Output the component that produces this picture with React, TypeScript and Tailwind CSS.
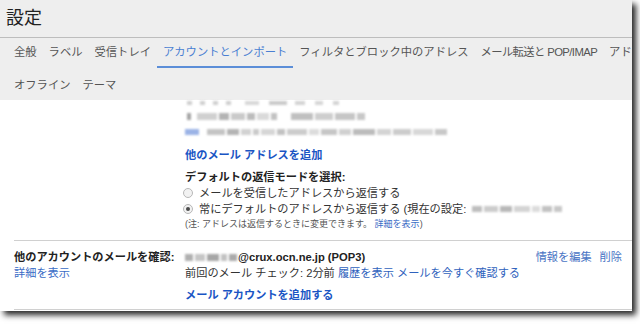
const FONT = "font-['Liberation_Sans','Noto_Sans_CJK_JP',sans-serif]"

const TABS = [
  "全般",
  "ラベル",
  "受信トレイ",
  "アカウントとインポート",
  "フィルタとブロック中のアドレス",
  "メール転送と POP/IMAP",
  "アドオン",
]

type Part = [number, string]

// blurred-out personal info
function Smudge({ parts, h = 6 }: { parts: Part[]; h?: number }) {
  return (
    <span className="inline-flex items-center gap-[2px] blur-[1.1px] align-middle">
      {parts.map(([w, c], i) => (
        <span key={i} className="block" style={{ width: w, height: h, background: c }} />
      ))}
    </span>
  )
}

function Radio({ checked }: { checked?: boolean }) {
  return (
    <span className="ml-[-2px] flex h-[10px] w-[10px] shrink-0 items-center justify-center rounded-full border border-[#b8b8b8] bg-[#f2f2f2]">
      {checked && <span className="h-[4px] w-[4px] rounded-full bg-[#4a4a4a]" />}
    </span>
  )
}

const ROW1: Part[] = [
  [5, "#cfcfcf"], [4, "#fff"], [5, "#cfcfcf"], [4, "#fff"], [5, "#cfcfcf"], [4, "#fff"], [5, "#cfcfcf"],
  [10, "#fff"], [14, "#d8d8d8"], [6, "#fff"], [18, "#cacaca"], [4, "#fff"], [10, "#d4d4d4"], [6, "#fff"], [8, "#d6d6d6"], [6, "#fff"], [6, "#d4d4d4"],
]
const ROW2: Part[] = [
  [4, "#a4a4a4"], [2, "#fff"], [20, "#d0d0d0"], [10, "#b4b4b4"], [14, "#cacaca"], [8, "#bcbcbc"], [12, "#dadada"], [6, "#c2c2c2"],
  [10, "#fff"], [22, "#c0c0c0"], [18, "#cecece"], [20, "#c6c6c6"], [8, "#c8c8c8"],
]
const ROW3: Part[] = [
  [14, "#9bb3e6"], [4, "#fff"], [18, "#c4c4c4"], [12, "#b4b4b4"], [10, "#d2d2d2"], [6, "#cacaca"], [14, "#d6d6d6"], [8, "#c2c2c2"],
  [20, "#cccccc"], [10, "#dcdcdc"], [16, "#c6c6c6"], [12, "#d0d0d0"], [22, "#bcbcbc"], [14, "#d4d4d4"], [18, "#cccccc"], [20, "#d8d8d8"], [12, "#c8c8c8"],
]
const ACCOUNT: Part[] = [[8, "#b0b0b0"], [10, "#c6c6c6"], [12, "#a6a6a6"], [6, "#c2c2c2"], [8, "#aaaaaa"]]
const CURRENT: Part[] = [[10, "#bebebe"], [14, "#cccccc"], [12, "#b8b8b8"], [16, "#d4d4d4"], [8, "#dcdcdc"], [10, "#c2c2c2"], [8, "#c8c8c8"]]

export default function App() {
  return (
    <div className={`h-[324px] w-[640px] bg-white ${FONT}`}>
      <div className="flex h-[311px] w-[632px] flex-col overflow-hidden bg-white shadow-[4px_4px_6px_rgba(0,0,0,0.85)]">
        {/* title */}
        <div className="flex h-[38px] shrink-0 items-center border-b border-[#bdbdbd] bg-[#eeeeee] pb-[1px] pl-[6px]">
          <h1 className="text-[18px] leading-none text-[#222]">設定</h1>
        </div>

        {/* tabs */}
        <div className="h-[62px] shrink-0 bg-[#eeeeee] pl-[8px] text-[11.3px] text-[#555]">
          <div className="flex h-[30px] whitespace-nowrap">
            {TABS.map((t, i) => (
              <div
                key={t}
                className={
                  i === 3
                    ? "flex shrink-0 items-center border-b-2 border-[#5b8ed8] px-[6px] pt-[1px] text-[#4a7fd2]"
                    : i === 5
                      ? "flex shrink-0 items-center border-b-2 border-transparent px-[6px] pt-[1px] tracking-[-0.6px]"
                      : "flex shrink-0 items-center border-b-2 border-transparent px-[6px] pt-[1px]"
                }
              >
                {t}
              </div>
            ))}
          </div>
          <div className="flex h-[32px] items-center pt-[2px]">
            <span className="px-[6px]">オフライン</span>
            <span className="px-[6px]">テーマ</span>
          </div>
        </div>

        {/* send mail as */}
        <div className="ml-[14px] border-b border-[#d0d0d0] pb-[7px] pl-[171px] text-[11.2px] text-[#222]">
          <div className="flex h-[6px] items-center pl-[2px]">
            <Smudge parts={ROW1} h={4} />
          </div>
          <div className="mt-[2px] flex h-[16px] items-center pl-[2px]">
            <Smudge parts={ROW2} h={7} />
          </div>
          <div className="flex h-[16px] items-center">
            <Smudge parts={ROW3} h={6} />
          </div>
          <div className="mt-[7px] flex h-[16px] items-center font-bold text-[#1a55c4]">他のメール アドレスを追加</div>
          <div className="mt-[6px] flex h-[16px] items-center font-bold">デフォルトの返信モードを選択:</div>
          <div className="flex h-[16px] items-center gap-[6px] text-[#333]">
            <Radio />
            <span>メールを受信したアドレスから返信する</span>
          </div>
          <div className="flex h-[16px] items-center gap-[6px] text-[#333]">
            <Radio checked />
            <span>常にデフォルトのアドレスから返信する (現在の設定:</span>
            <Smudge parts={CURRENT} h={6} />
          </div>
          <div className="flex h-[16px] items-center text-[9px] text-[#555]">
            <span>
              (注: アドレスは返信するときに変更できます。 <span className="text-[#3a6cc6]">詳細を表示</span>)
            </span>
          </div>
        </div>

        {/* check mail from other accounts */}
        <div className="ml-[14px] border-b border-[#d0d0d0] pb-[6px] pt-[8px] text-[11.2px] text-[#222]">
          <div className="grid grid-cols-[171px_1fr]">
            <div>
              <div className="flex h-[16px] items-center font-bold">他のアカウントのメールを確認:</div>
              <div className="flex h-[16px] items-center text-[#3a6cc6]">詳細を表示</div>
            </div>
            <div>
              <div className="flex h-[16px] items-center justify-between pr-[10px]">
                <span className="flex items-center font-bold">
                  <Smudge parts={ACCOUNT} h={7} />
                  <span className="ml-[1px]">@crux.ocn.ne.jp (POP3)</span>
                </span>
                <span className="flex gap-[8px] text-[#4a74c4]">
                  <span>情報を編集</span>
                  <span>削除</span>
                </span>
              </div>
              <div className="flex h-[16px] items-center text-[#333]">
                <span>
                  前回のメール チェック: 2分前 <span className="text-[#2f62bd]">履歴を表示</span>{" "}
                  <span className="text-[#2f62bd]">メールを今すぐ確認する</span>
                </span>
              </div>
              <div className="mt-[6px] flex h-[16px] items-center font-bold text-[#1a55c4]">メール アカウントを追加する</div>
            </div>
          </div>
        </div>
      </div>
    </div>
  )
}
